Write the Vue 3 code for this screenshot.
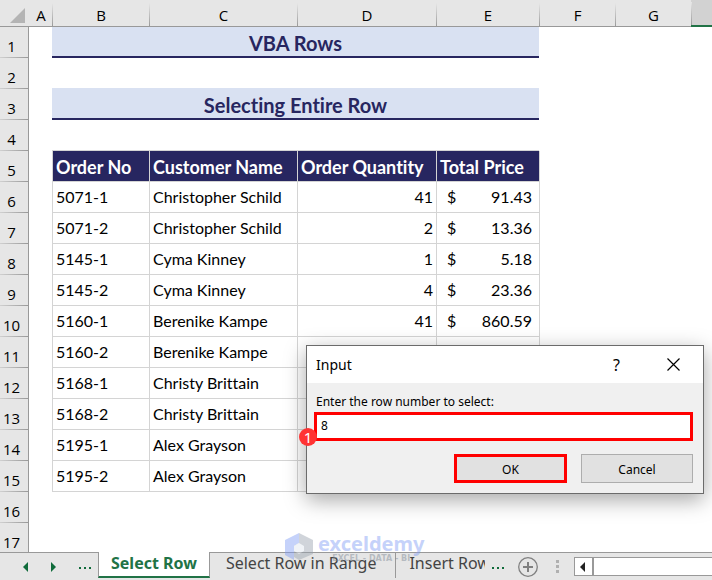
<script setup>
import { ref } from 'vue'

const columns = ['A', 'B', 'C', 'D', 'E', 'F', 'G']
const orders = [
  { row: 6, no: '5071-1', name: 'Christopher Schild', qty: '41', price: '91.43' },
  { row: 7, no: '5071-2', name: 'Christopher Schild', qty: '2', price: '13.36' },
  { row: 8, no: '5145-1', name: 'Cyma Kinney', qty: '1', price: '5.18' },
  { row: 9, no: '5145-2', name: 'Cyma Kinney', qty: '4', price: '23.36' },
  { row: 10, no: '5160-1', name: 'Berenike Kampe', qty: '41', price: '860.59' },
  { row: 11, no: '5160-2', name: 'Berenike Kampe', qty: '', price: '' },
  { row: 12, no: '5168-1', name: 'Christy Brittain', qty: '', price: '' },
  { row: 13, no: '5168-2', name: 'Christy Brittain', qty: '', price: '' },
  { row: 14, no: '5195-1', name: 'Alex Grayson', qty: '', price: '' },
  { row: 15, no: '5195-2', name: 'Alex Grayson', qty: '', price: '' }
]
const rowNumber = ref('8')
</script>

<template>
  <div class="workbook">
    <main class="sheet">
      <table class="grid">
        <colgroup>
          <col class="c-head" /><col class="c-a" /><col class="c-b" /><col class="c-c" />
          <col class="c-d" /><col class="c-e" /><col class="c-f" /><col class="c-f" /><col />
        </colgroup>
        <thead>
          <tr>
            <th class="corner">
              <svg width="15" height="15" viewBox="0 0 15 15" aria-hidden="true"><path d="M15 0V15H0Z" fill="#b4b4b4" /></svg>
            </th>
            <th v-for="c in columns" :key="c" class="col-head" scope="col">{{ c }}</th>
            <th class="col-head selected"></th>
          </tr>
        </thead>
        <tbody>
          <tr>
            <th class="row-head" scope="row">1</th>
            <td></td>
            <td class="band" colspan="4">VBA Rows</td>
          </tr>
          <tr>
            <th class="row-head" scope="row">2</th>
            <td></td>
            <td class="band-top" colspan="4"></td>
          </tr>
          <tr>
            <th class="row-head" scope="row">3</th>
            <td></td>
            <td class="band" colspan="4">Selecting Entire Row</td>
          </tr>
          <tr>
            <th class="row-head" scope="row">4</th>
            <td></td>
            <td class="table-top" colspan="4"></td>
          </tr>
          <tr>
            <th class="row-head" scope="row">5</th>
            <td></td>
            <th class="cell title" scope="col">Order No</th>
            <th class="cell title" scope="col">Customer Name</th>
            <th class="cell title" scope="col">Order Quantity</th>
            <th class="cell title" scope="col">Total Price</th>
            <td class="edge"></td>
          </tr>
          <tr v-for="o in orders" :key="o.row">
            <th class="row-head" scope="row">{{ o.row }}</th>
            <td></td>
            <td class="cell">{{ o.no }}</td>
            <td class="cell">{{ o.name }}</td>
            <td class="cell qty">{{ o.qty }}</td>
            <td class="cell">
              <div v-if="o.price" class="money"><span>$</span><span>{{ o.price }}</span></div>
            </td>
            <td class="edge"></td>
          </tr>
          <tr><th class="row-head" scope="row">16</th></tr>
          <tr><th class="row-head" scope="row">17</th></tr>
        </tbody>
      </table>
    </main>

    <nav class="tabs" aria-label="Sheets">
      <div class="tab-nav">
        <button type="button" aria-label="Previous sheet"><svg width="5" height="10" viewBox="0 0 5 10"><path d="M5 0V10L0 5Z" fill="#0f6b3a" /></svg></button>
        <button type="button" aria-label="Next sheet"><svg width="5" height="10" viewBox="0 0 5 10"><path d="M0 0V10L5 5Z" fill="#0f6b3a" /></svg></button>
        <button type="button" aria-label="More sheets"><svg width="12" height="10" viewBox="0 0 12 10"><path d="M0 5h2v2H0zM5 5h2v2H5zM10 5h2v2h-2z" fill="#0f6b3a" /></svg></button>
      </div>
      <a class="tab active" href="#select-row">Select Row</a>
      <a class="tab" href="#range">Select Row in Range</a>
      <a class="tab clipped" href="#insert">Insert Row</a>
      <button class="more" type="button" aria-label="More sheets"><svg width="12" height="10" viewBox="0 0 12 10"><path d="M0 5h2v2H0zM5 5h2v2H5zM10 5h2v2h-2z" fill="#0f6b3a" /></svg></button>
      <button class="add" type="button" aria-label="New sheet">
        <svg width="20" height="20" viewBox="0 0 20 20" fill="none" stroke="#808080"><circle cx="10" cy="10" r="9.3" stroke-width="1.3" /><path d="M10 5v10M5 10h10" stroke-width="2" /></svg>
      </button>
      <svg class="grip" width="3" height="13" viewBox="0 0 3 13" aria-hidden="true"><path d="M0 0h3v3H0zM0 5h3v3H0zM0 10h3v3H0z" fill="#b0b0b0" /></svg>
      <div class="scroll">
        <button type="button" aria-label="Scroll left"><svg width="5" height="10" viewBox="0 0 5 10"><path d="M5 0V10L0 5Z" fill="#222" /></svg></button>
        <div class="thumb"></div>
      </div>
    </nav>

    <div class="watermark" aria-hidden="true">
      <svg width="28" height="27" viewBox="0 0 28 27">
        <path d="M0 7L14 0V10L9 13V27L0 22Z" fill="#7f9cf5" />
        <path d="M14 0L28 7V21L14 27L9 24V13L14 10Z" fill="#98a2ae" />
        <path d="M9 13L14 10L19 13V18L14 21L9 18Z" fill="#dfe6ee" />
      </svg>
      <div class="brand">
        <span class="brand-name">exceldemy</span>
        <span class="brand-sub">EXCEL - DATA - BI</span>
      </div>
    </div>

    <form class="dialog" role="dialog" aria-labelledby="dlg-title" @submit.prevent>
      <header class="dialog-bar">
        <h2 id="dlg-title">Input</h2>
        <button type="button" class="help" aria-label="Help">?</button>
        <button type="button" class="close" aria-label="Close">
          <svg width="13" height="13" viewBox="0 0 13 13"><path d="M.5 .5L12.5 12.5M12.5 .5L.5 12.5" stroke="#000" stroke-width="1.2" /></svg>
        </button>
      </header>
      <div class="dialog-body">
        <label for="row-number">Enter the row number to select:</label>
        <input id="row-number" v-model="rowNumber" type="text" />
        <div class="actions">
          <button class="btn ok" type="submit">OK</button>
          <button class="btn" type="button">Cancel</button>
        </div>
      </div>
      <span class="step">1</span>
    </form>
  </div>
</template>

<style>
body { margin: 0; }
</style>

<style scoped>
* { box-sizing: border-box; }
.workbook {
  position: relative;
  display: flex;
  flex-direction: column;
  height: 100vh;
  overflow: hidden;
  background: #fff;
  color: #000;
  font-family: "Noto Sans", "Open Sans", sans-serif;
  font-variant-ligatures: none;
}
button { padding: 0; border: 0; background: none; color: inherit; font: inherit; }
svg { display: block; }
.sheet { flex: 1; min-height: 0; overflow: hidden; }
.grid { width: 100%; table-layout: fixed; border-collapse: separate; border-spacing: 0; }
.c-head { width: 29px; }
.c-a { width: 23px; }
.c-b { width: 97px; }
.c-c { width: 148px; }
.c-d { width: 139px; }
.c-e { width: 103px; }
.c-f { width: 76px; }
th, td { height: 31px; padding: 0; }
.corner, .col-head {
  height: 27px;
  background: linear-gradient(#e6e6e6, #9a9a9a) left bottom / 1px 23px no-repeat #e6e6e6;
  border-bottom: 1px solid #999;
  font-family: "Open Sans", sans-serif;
  font-size: 15px;
  line-height: 20px;
  font-weight: 400;
  padding: 4px 0 0 1px;
}
.corner, .corner + .col-head { background: #e6e6e6; }
.corner svg { margin-left: 9px; }
.col-head.selected { background-color: #d2d2d2; border-bottom: 2px solid #217346; }
.row-head {
  background: linear-gradient(90deg, #d0d0d0, #999) left bottom / 100% 1px no-repeat #e6e6e6;
  border-right: 1px solid #999;
  padding: 6px 5px 0 0;
  font-family: "Open Sans", sans-serif;
  font-size: 15px;
  line-height: 20px;
  font-weight: 400;
}
.band {
  background: #d9e1f2;
  border-bottom: 2px solid #272660;
  padding-top: 2px;
  color: #272660;
  font-family: Lato, sans-serif;
  font-size: 20px;
  line-height: 24px;
  font-weight: 700;
  text-align: center;
}
.band-top { border-bottom: 1px solid #d9e1f2; }
.table-top { border-bottom: 1px solid #d4d4d4; }
.cell {
  border-left: 1px solid #d4d4d4;
  border-bottom: 1px solid #d4d4d4;
  padding: 0 3px;
  font-family: Lato, sans-serif;
  font-size: 16px;
  line-height: 20px;
  text-align: left;
  white-space: nowrap;
}
.title { padding-top: 2px; background: #272660; color: #fff; font-size: 18px; font-weight: 700; }
.qty { text-align: right; }
.money { display: flex; justify-content: space-between; padding: 0 4px 0 7px; }
.edge { border-left: 1px solid #d4d4d4; }

.tabs {
  display: flex;
  align-items: flex-start;
  height: 28px;
  background: #e6e6e6;
  border-top: 1px solid #999;
  font-size: 16px;
}
.tab-nav { display: flex; flex: none; gap: 23px; width: 98px; padding: 9px 0 0 23px; }
.tab {
  flex: none;
  height: 26px;
  margin-top: -1px;
  padding: 0 19px 0 16px;
  color: #444;
  line-height: 22px;
  text-decoration: none;
  white-space: nowrap;
}
.active {
  padding: 0 12px;
  background: #fff;
  border: solid #999;
  border-width: 0 1px 2px;
  border-bottom-color: #217346;
  color: #217346;
  font-weight: 700;
}
.clipped { width: 90px; padding: 0 0 0 13px; border-left: 1px solid #999; overflow: hidden; }
.more { margin: 9px 14px 0 7px; }
.add { margin-top: 4px; }
.grip { margin: 7px 15px 0 18px; }
.scroll { display: flex; flex: 1; height: 19px; margin-top: 4px; border: 1px solid #999; border-right: 0; background: #fff; }
.scroll button { width: 19px; padding-left: 5px; border-right: 2px solid #999; }
.thumb { flex: 1; }

.watermark { position: absolute; left: 285px; top: 533px; display: flex; gap: 5px; opacity: 0.45; }
.brand { display: flex; flex-direction: column; align-items: center; }
.brand-name { color: #7f9cf5; font-size: 20px; line-height: 22px; font-weight: 700; }
.brand-sub { color: #7c8794; font-family: "DejaVu Sans", sans-serif; font-size: 8px; line-height: 8px; font-weight: 700; }

.dialog {
  position: absolute;
  left: 306px;
  top: 345px;
  width: 398px;
  background: #f0f0f0;
  border: 1px solid #6b6b6b;
  box-shadow: 0 6px 20px rgba(0, 0, 0, 0.35);
  font-size: 12px;
}
.dialog-bar { display: flex; align-items: center; height: 37px; padding: 0 23px 0 9px; background: #fff; }
.dialog-bar h2 { flex: 1; margin: 0; font-size: 14px; line-height: 20px; font-weight: 400; }
.help { font-size: 16px; }
.close { margin-left: 47px; }
.dialog-body { display: flex; flex-direction: column; padding: 11px 10px 10px 7px; }
label { padding-left: 2px; line-height: 16px; }
input {
  height: 29px;
  margin-top: 2px;
  padding: 0 4px 2px;
  border: 3px solid #f00;
  background: #fff;
  font: inherit;
}
.actions { display: flex; justify-content: flex-end; gap: 14px; margin-top: 13px; }
.btn { width: 112px; height: 29px; padding-top: 1px; border: 1px solid #adadad; background: #e1e1e1; }
.ok { width: 113px; border: 3px solid #f00; }
.step {
  position: absolute;
  left: -8px;
  top: 82px;
  width: 18px;
  height: 18px;
  border-radius: 50%;
  background: #f33;
  color: #fff;
  font-size: 15px;
  line-height: 18px;
  text-align: center;
}
</style>
